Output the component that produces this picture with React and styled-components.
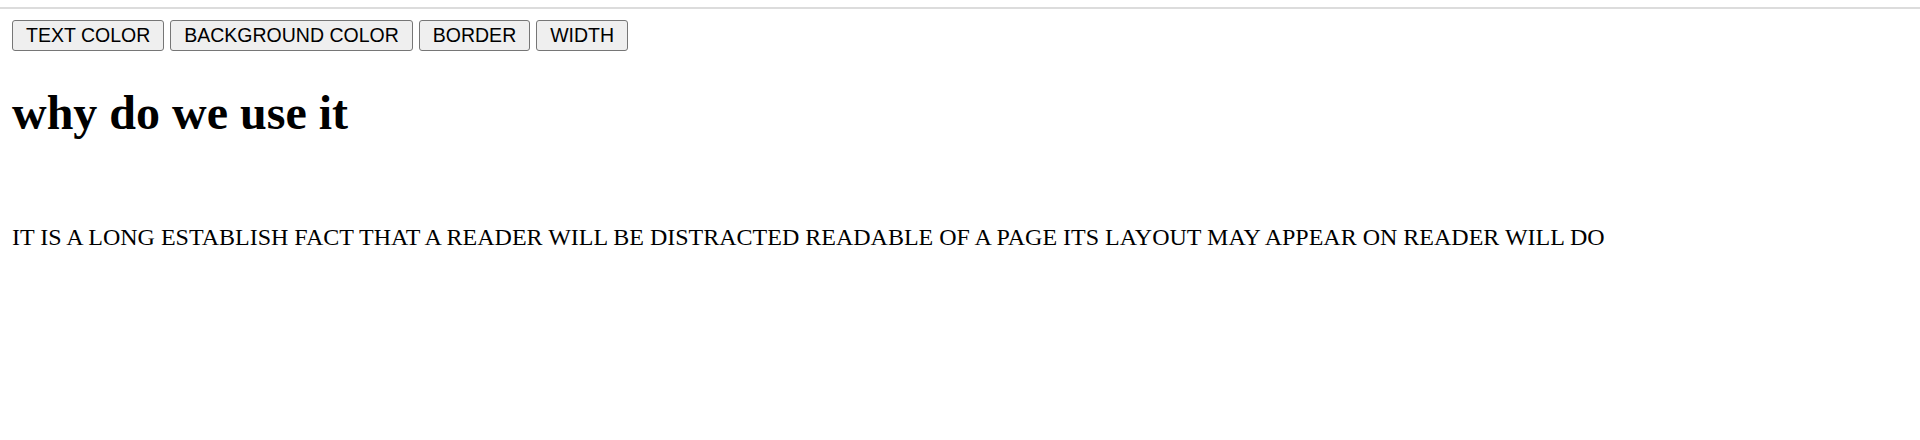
import React from 'react'
import styled, { createGlobalStyle } from 'styled-components'

const GlobalStyle = createGlobalStyle`
  html, body {
    margin: 0;
    padding: 0;
    background: #fff;
  }
`

const TopRule = styled.div`
  height: 2px;
  margin-top: 7px;
  background: #dcdcdc;
`

const Page = styled.div`
  padding: 0 12px;
  color: #000;
`

const Toolbar = styled.div`
  display: flex;
  gap: 6px;
  margin-top: 11px;
`

const Button = styled.button`
  height: 31px;
  padding: 0 13px;
  font-family: 'Liberation Sans', Arial, sans-serif;
  font-size: 19.5px;
  color: #000;
  background: #efefef;
  border: 1px solid #767676;
  border-radius: 3px;
  cursor: pointer;

  &:hover {
    background: #e5e5e5;
  }
`

const Heading = styled.h1`
  margin: 34px 0 0;
  font-family: 'Liberation Serif', 'Times New Roman', serif;
  font-size: 48px;
  font-weight: 700;
  line-height: 1.15;
`

const Text = styled.p`
  margin: 84px 0 0;
  font-family: 'Liberation Serif', 'Times New Roman', serif;
  font-size: 24px;
  line-height: 1.15;
`

const buttons = ['TEXT COLOR', 'BACKGROUND COLOR', 'BORDER', 'WIDTH']

const App = () => {
  return (
    <>
      <GlobalStyle />
      <TopRule />
      <Page>
        <Toolbar>
          {buttons.map(label => (
            <Button key={label}>{label}</Button>
          ))}
        </Toolbar>
        <Heading>why do we use it</Heading>
        <Text>
          IT IS A LONG ESTABLISH FACT THAT A READER WILL BE DISTRACTED READABLE OF A PAGE ITS LAYOUT MAY APPEAR ON READER WILL DO
        </Text>
      </Page>
    </>
  )
}

export default App
